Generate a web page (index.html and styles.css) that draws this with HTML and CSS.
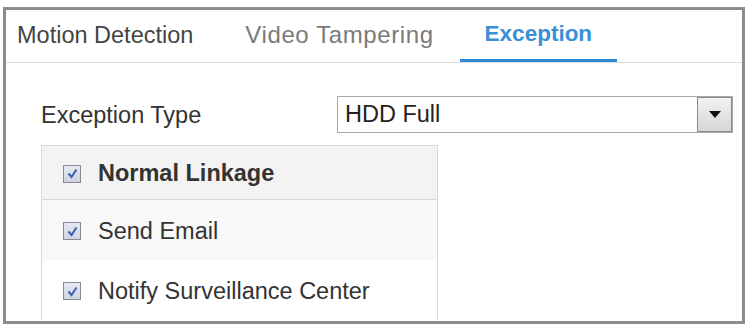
FILE: index.html
```html
<!DOCTYPE html>
<html lang="en">
<head>
    <meta charset="UTF-8">
    <title>Exception</title>
    <link rel="stylesheet" href="styles.css">
</head>
<body>
<div class="frame">
    <!--标签栏-->
    <ul class="tabs">
        <li>Motion Detection</li>
        <li class="muted">Video Tampering</li>
        <li class="current">Exception</li>
    </ul>
    <div class="content">
        <div class="field">
            <span class="label">Exception Type</span>
            <div class="select">
                <span class="value">HDD Full</span>
                <span class="drop"><i></i></span>
            </div>
        </div>
        <!--联动方式-->
        <ul class="linkage">
            <li class="head"><span class="check"><svg width="13" height="13" viewBox="0 0 13 13"><path d="M2.5 6.5 L5.5 10 L10.5 2.5" fill="none" stroke="#3c5fb4" stroke-width="2"/></svg></span>Normal Linkage</li>
            <li class="odd"><span class="check"><svg width="13" height="13" viewBox="0 0 13 13"><path d="M2.5 6.5 L5.5 10 L10.5 2.5" fill="none" stroke="#3c5fb4" stroke-width="2"/></svg></span>Send Email</li>
            <li><span class="check"><svg width="13" height="13" viewBox="0 0 13 13"><path d="M2.5 6.5 L5.5 10 L10.5 2.5" fill="none" stroke="#3c5fb4" stroke-width="2"/></svg></span>Notify Surveillance Center</li>
        </ul>
    </div>
</div>
</body>
</html>
```

FILE: styles.css
```css
* {
    padding: 0;
    margin: 0;
    list-style: none;
    box-sizing: border-box;
}

body {
    background: #fff;
    font-family: "Liberation Sans", Arial, sans-serif;
    font-size: 23.5px;
    color: #333;
}

.frame {
    width: 742px;
    height: 317px;
    margin: 7px 0 0 3px;
    border: 3px solid #8c8c8c;
    overflow: hidden;
}

.tabs {
    display: flex;
    height: 53px;
    padding-left: 11px;
    border-bottom: 1px solid #dcdcdc;
}

.tabs li {
    display: flex;
    align-items: center;
    padding: 0 26px 2px;
    color: #444;
}

.tabs li:first-child {
    padding-left: 0;
}

.tabs li.muted {
    color: #7a7a7a;
    font-size: 24px;
    letter-spacing: 0.6px;
}

.tabs li.current {
    color: #3a8fd6;
    font-weight: bold;
    font-size: 22.5px;
    padding: 0 25px 4px;
    box-shadow: inset 0 -3px 0 #2c8ad8;
}

.content {
    padding: 33px 9px 0 35px;
}

.field {
    display: flex;
    align-items: center;
    height: 37px;
}

.label {
    width: 296px;
    padding-top: 2px;
}

.select {
    display: flex;
    align-items: center;
    width: 396px;
    height: 37px;
    border: 1px solid #a9a9a9;
    color: #222;
}

.select .value {
    flex: 1;
    padding-left: 7px;
}

.select .drop {
    display: flex;
    align-items: center;
    justify-content: center;
    width: 35px;
    height: 35px;
    border: 1px solid #8a8a8a;
    background: linear-gradient(#f2f2f2, #d6d6d6);
}

.select .drop i {
    width: 0;
    height: 0;
    border-left: 6px solid transparent;
    border-right: 6px solid transparent;
    border-top: 7px solid #111;
}

.linkage {
    width: 397px;
    margin-top: 12px;
    border: 1px solid #d8d8d8;
    border-bottom: 0;
}

.linkage li {
    display: flex;
    align-items: center;
    height: 60px;
    padding: 2px 0 0 21px;
}

.linkage li.head {
    height: 54px;
    font-weight: bold;
    background: #f3f3f3;
    border-bottom: 1px solid #d8d8d8;
}

.linkage li.odd {
    background: #f8f8f8;
}

.check {
    display: flex;
    align-items: center;
    justify-content: center;
    width: 18px;
    height: 18px;
    margin-right: 17px;
    border: 1px solid #858a95;
    background: linear-gradient(#e6e9f1, #cfd4e1);
}
```
